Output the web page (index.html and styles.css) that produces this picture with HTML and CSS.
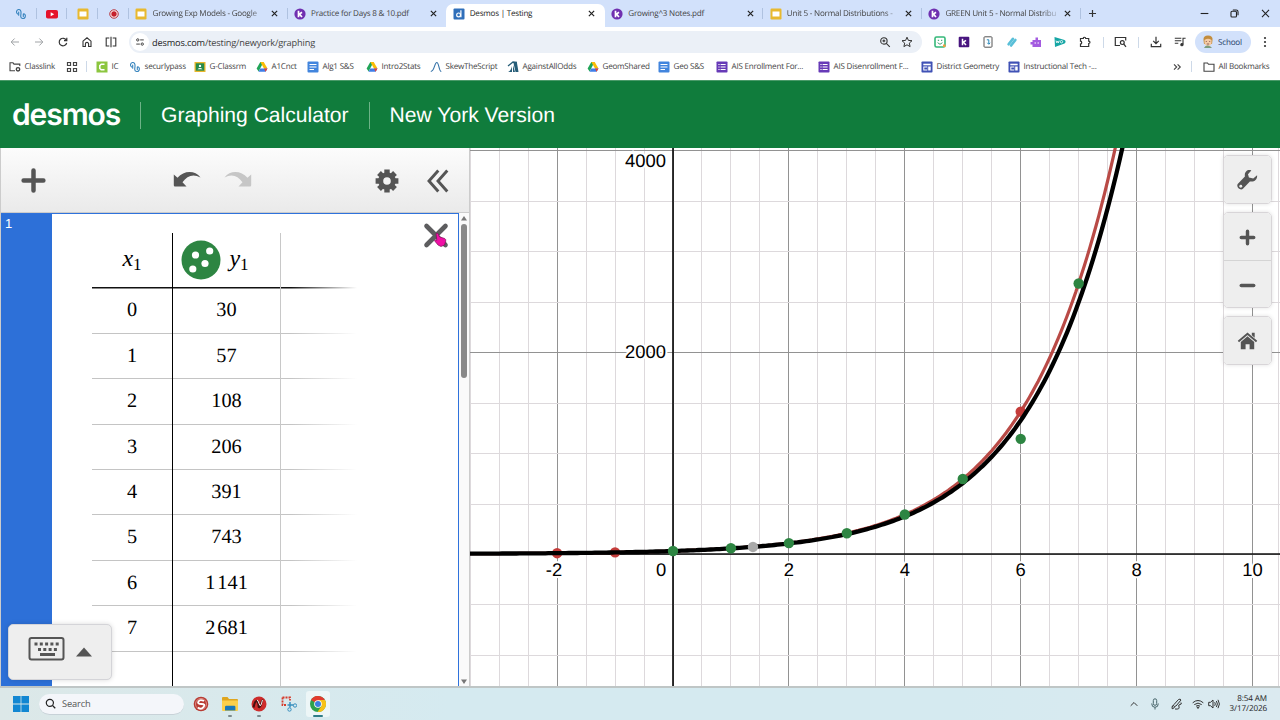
FILE: index.html
```html
<!DOCTYPE html>
<html lang="en">
<head>
  <meta charset="UTF-8">
  <title>Desmos | Testing</title>
  <link rel="stylesheet" href="styles.css">
</head>
<body>

  <!-- shared icons -->
  <svg width="0" height="0" class="defs">
    <symbol id="close" viewBox="0 0 10 10"><path d="M2.6 2.6l4.8 4.8M7.4 2.6L2.6 7.4" stroke="#222" stroke-width="1.1"/></symbol>
    <symbol id="slides" viewBox="0 0 12 12"><rect x=".5" y=".5" width="11" height="11" rx="1.2" fill="#e8b92f"/><rect x="2.5" y="3.5" width="7" height="5" fill="#fff"/></symbol>
    <symbol id="kami" viewBox="0 0 12 12"><circle cx="6" cy="6" r="5.6" fill="#7030b0"/><path d="M4.5 2.8v6.4M4.7 6.6L8 4.3M5.4 6.2L8 9" stroke="#fff" stroke-width="1.7"/></symbol>
    <symbol id="securly" viewBox="0 0 12 12"><path d="M2.600 6C.8 5 1.300 1.700 3.500 1.500S6.200 3.500 6 5.200L5.700 8.300C5.700 11 9.500 11.200 10.200 9S9.500 5.700 8.600 5.700M3.700 4v3.200M8.300 6v2.500" fill="none" stroke="#3482bd" stroke-width="1.100" stroke-linecap="round"/></symbol>
    <symbol id="drive" viewBox="0 0 12 12"><path d="M4.300 1h3.400L6 4 2.600 10.500.6 7.500z" fill="#21a558"/><path d="M7.700 1l3.800 6.500H8L4.300 1z" fill="#fbbc05"/><path d="M4.200 7.500h7.300L9.600 10.700H2.500z" fill="#3f7ee8"/><path d="M8 7.500h3.500l-1.900 3.200z" fill="#e84335"/></symbol>
    <symbol id="docs" viewBox="0 0 12 12"><rect x=".5" y=".5" width="11" height="11" rx="1" fill="#4285dd"/><path d="M2.500 3.500h7M2.500 6h7M2.500 8.500h4.500" stroke="#fff" stroke-width="1.200"/></symbol>
    <symbol id="forms" viewBox="0 0 12 12"><rect x=".5" y=".5" width="11" height="11" rx=".8" fill="#673ab7"/><path d="M4.600 3.500h5M4.600 6h5M4.600 8.500h5M2.400 3.500h1.200M2.400 6h1.200M2.400 8.500h1.200" stroke="#fff" stroke-width="1.200"/></symbol>
    <symbol id="sites" viewBox="0 0 12 12"><rect x=".5" y=".5" width="11" height="11" rx=".8" fill="#3f51b5"/><path d="M2.300 3.500h7.400" stroke="#fff" stroke-width="1.600"/><path d="M2.300 5.500h4v4h-4zM7.200 5.500h2.500v4H7.200z" fill="#fff"/><path d="M3.300 6.500h3v2h-3z" fill="#3f51b5"/></symbol>
  </svg>

  <div class="tabs">
    <div class="pin"><svg><use href="#securly"/></svg></div>
    <div class="pin"><svg viewBox="0 0 12 12"><rect y="2" width="12" height="8.500" rx="1.800" fill="#e5132b"/><path d="M4.700 4.200v4L8.200 6.200z" fill="#fff"/></svg></div>
    <div class="pin"><svg><use href="#slides"/></svg></div>
    <div class="pin"><svg viewBox="0 0 12 12"><circle cx="6" cy="6" r="4.200" fill="#fff" stroke="#b3262f" stroke-width="1"/><circle cx="6" cy="6" r="2.700" fill="#c5202c"/></svg></div>
    <div class="tab"><svg><use href="#slides"/></svg><span class="fade">Growing Exp Models - Google</span><svg class="x"><use href="#close"/></svg></div>
    <div class="tab nosep"><svg><use href="#kami"/></svg><span>Practice for Days 8 &amp; 10.pdf</span><svg class="x"><use href="#close"/></svg></div>
    <div class="tab active"><svg viewBox="0 0 12 12"><rect x=".5" y=".5" width="11" height="11" rx="1" fill="#2f6fba"/><circle cx="5.600" cy="6.900" r="1.900" fill="none" stroke="#fff" stroke-width="1.200"/><path d="M7.900 2.300v7" stroke="#fff" stroke-width="1.200"/></svg><span>Desmos | Testing</span><svg class="x"><use href="#close"/></svg></div>
    <div class="tab"><svg><use href="#kami"/></svg><span>Growing^3 Notes.pdf</span><svg class="x"><use href="#close"/></svg></div>
    <div class="tab"><svg><use href="#slides"/></svg><span class="fade">Unit 5 - Normal Distributions -</span><svg class="x"><use href="#close"/></svg></div>
    <div class="tab"><svg><use href="#kami"/></svg><span class="fade">GREEN Unit 5 - Normal Distribu</span><svg class="x"><use href="#close"/></svg></div>
    <svg class="new-tab" viewBox="0 0 10 10"><path d="M5 1.800v6.400M1.800 5h6.400" stroke="#333" stroke-width="1.100"/></svg>
    <div class="win">
      <svg viewBox="0 0 10 10"><path d="M1.500 5h7" stroke="#222"/></svg>
      <svg viewBox="0 0 10 10" fill="none" stroke="#222"><rect x="1.800" y="3" width="5" height="5.200" rx="1"/><path d="M3.500 1.800h3c1.200 0 1.700.6 1.700 1.700v3"/></svg>
      <svg viewBox="0 0 10 10"><path d="M1.800 1.800l6.400 6.400M8.200 1.800L1.800 8.200" stroke="#222"/></svg>
    </div>
  </div>

  <div class="toolbar">
    <div class="nav">
      <svg viewBox="0 0 12 12" fill="none" stroke="#a0a3a6" stroke-width="1"><path d="M10 6H2.300M5.600 2.500L2.200 6l3.400 3.500"/></svg>
      <svg viewBox="0 0 12 12" fill="none" stroke="#a0a3a6" stroke-width="1"><path d="M2 6h7.700M6.400 2.500L9.800 6 6.400 9.500"/></svg>
      <svg viewBox="0 0 12 12" fill="none" stroke="#333" stroke-width="1.200"><path d="M9.400 4.300A3.800 3.800 0 1 0 9.700 7M9.800 1.800v2.800H7"/></svg>
      <svg viewBox="0 0 12 12" fill="none" stroke="#333" stroke-width="1.100"><path d="M2 5.200L6 1.800l4 3.400v5.300H7.600V8c0-1-.7-1.600-1.600-1.600S4.400 7 4.400 8v2.500H2z"/></svg>
      <svg viewBox="0 0 12 12" fill="none" stroke="#333" stroke-width="1.100"><path d="M4.300 2H1.200v8h3.100M6 .8v10.400M7.700 2h3.100v8H7.700"/></svg>
    </div>
    <div class="omnibox">
      <div class="site-info"><svg viewBox="0 0 12 12" fill="none" stroke="#444" stroke-width="1.200"><circle cx="3.300" cy="3.500" r="1.400"/><path d="M6.200 3.500h4.300M1.500 8.500h4.300"/><circle cx="8.700" cy="8.500" r="1.400"/></svg></div>
      <span class="url"><b>desmos.com</b>/testing/newyork/graphing</span>
      <svg viewBox="0 0 12 12" fill="none" stroke="#333" stroke-width="1.100"><circle cx="4.900" cy="4.900" r="3.200"/><path d="M7.300 7.300l3.500 3.500M4.900 3.500v2.800M3.500 4.900h2.800"/></svg>
      <svg viewBox="0 0 12 12" fill="none" stroke="#333" stroke-width="1"><path d="M6 1.200l1.400 3.200 3.600.3-2.700 2.400.8 3.500L6 8.800l-3.100 1.800.8-3.500L1 4.700l3.600-.3z"/></svg>
    </div>
    <div class="extensions">
      <svg viewBox="0 0 12 12"><rect x="1" y="1" width="10" height="10" rx="1.500" fill="#fff" stroke="#35b879" stroke-width="1.600"/><path d="M3.800 4.300h1.300M7 4.300h1.300M3.800 6.500c.8 2 3.600 2 4.400 0" fill="none" stroke="#279665"/><path d="M9 8.500h2.500V11H9z" fill="#ef9d3c"/></svg>
      <svg viewBox="0 0 12 12"><rect x=".7" y=".7" width="10.600" height="10.600" rx="1" fill="#48157f"/><path d="M4.500 2.800v6.400M4.700 6.600L8 4.300M5.400 6.200L8 9" stroke="#fff" stroke-width="1.500"/></svg>
      <svg viewBox="0 0 12 12" fill="none"><rect x="2" y=".8" width="8" height="10.400" rx=".8" stroke="#555"/><path d="M4.800 3.800h2v4M5.300 6.800l1.500 1.500 1.300-1.500" stroke="#2586ba"/></svg>
      <svg viewBox="0 0 12 12" fill="none" stroke="#59bfd8" stroke-width="2.600" stroke-linecap="round"><path d="M2.600 8.300l4.300-5.500M5.100 9.500l4.300-5.500"/></svg>
      <svg viewBox="0 0 12 12"><path d="M2.500 4h3V1.500H8V4h3v7H2.500V8.500H.5V6h2z" fill="#a45be0"/><path d="M4.500 7h1.500M7.500 7H9" stroke="#fff"/></svg>
      <svg viewBox="0 0 12 12"><path d="M.5 1l10 3c1.500.5 1.400 2.900 0 3.400L1 11z" fill="#16a6a5"/><path d="M2 4.600l.8 2.200.8-1.500.8 1.500.8-2.200" stroke="#fff" stroke-width=".9" fill="none"/><circle cx="7.500" cy="5.700" r="1.200" stroke="#fff" stroke-width=".8" fill="none"/></svg>
      <svg viewBox="0 0 12 12" fill="none" stroke="#333" stroke-width="1.200"><path d="M1.500 2.500h2.800c0-1.700 2.400-1.700 2.400 0h3v2.700c1.700 0 1.700 2.300 0 2.300v3H1.500V8c1.600 0 1.600-2.800 0-2.800z"/></svg>
    </div>
    <i class="sep"></i>
    <svg class="tool lens" viewBox="0 0 12 12" fill="none" stroke="#333" stroke-width="1.200"><path d="M5.500 9.500H.8v-8h10.400v3"/><circle cx="7.800" cy="6.600" r="1.900"/><path d="M9.200 8l2.300 2.800"/></svg>
    <i class="sep"></i>
    <svg class="tool dl" viewBox="0 0 12 12" fill="none" stroke="#333" stroke-width="1.200"><path d="M6 .8v6.500M3.200 4.800L6 7.600l2.800-2.800M1.300 7.800v2.900h9.400V7.800"/></svg>
    <svg class="tool music" viewBox="0 0 12 12" fill="none" stroke="#333" stroke-width="1.100"><path d="M.8 2.300h6.500M.8 4.800h6.500M.8 7.300h3.500M9 8.600V2.300h2.600"/><circle cx="7.900" cy="8.700" r="1.100" fill="#333"/></svg>
    <div class="profile">
      <svg viewBox="0 0 12 14"><path d="M1.500 5Q1 .5 6 .5T10.500 5L10 9H2z" fill="#c28c3d"/><path d="M2.500 5q3.500-2.500 7 0v3Q9 11 6 11T2.500 8z" fill="#f4cba5"/><path d="M2 13q1-3 4-2.500t4 2.500z" fill="#7c9d7d"/><path d="M3.800 6.500h1M7.200 6.500h1M4.800 9h2.400" stroke="#744" stroke-width=".8"/></svg>
      <span>School</span>
    </div>
    <svg class="tool dots" viewBox="0 0 12 12" fill="#333"><circle cx="6" cy="2" r="1.100"/><circle cx="6" cy="6" r="1.100"/><circle cx="6" cy="10" r="1.100"/></svg>
  </div>

  <div class="bookmarks">
    <a><svg viewBox="0 0 12 12" fill="none" stroke="#444" stroke-width="1.100"><path d="M6 9.800H1v-8h3l1 1.300h5.800v2"/><circle cx="9" cy="8.300" r="1.700" stroke-width="1.400"/></svg>Classlink</a>
    <a><svg viewBox="0 0 12 12" fill="none" stroke="#444" stroke-width="1.200"><path d="M1.500 1.500h3v3h-3zM7.500 1.500h3v3h-3zM1.500 7.500h3v3h-3zM7.500 7.500h3v3h-3z"/></svg><i class="sep"></i></a>
    <a><svg viewBox="0 0 12 12"><rect x=".5" y=".5" width="11" height="11" fill="#8cc63f"/><path d="M8.500 3.300H5.200L3.800 4.600v2.800l1.400 1.300h3.300" fill="none" stroke="#fff" stroke-width="1.500"/></svg>IC</a>
    <a><svg><use href="#securly"/></svg>securlypass</a>
    <a><svg viewBox="0 0 12 12"><rect x=".5" y="1" width="11" height="10" fill="#e8b72d"/><rect x="1.800" y="2.300" width="8.400" height="7.400" fill="#268a4b"/><circle cx="6" cy="4.900" r="1.200" fill="#fff"/><path d="M3.500 8.300q2.500-2.800 5 0z" fill="#fff"/></svg>G-Classrm</a>
    <a><svg><use href="#drive"/></svg>A1Cnct</a>
    <a><svg><use href="#docs"/></svg>Alg1 S&amp;S</a>
    <a><svg><use href="#drive"/></svg>Intro2Stats</a>
    <a><svg viewBox="0 0 12 12" fill="none" stroke="#3472a8" stroke-width="1.100"><path d="M.8 10.500C4.500 10.500 4.500 1.500 6.800 1.500s2 9 4.500 9"/></svg>SkewTheScript</a>
    <a><svg viewBox="0 0 12 12"><path d="M1 11q3-1 4-6v6zM6 11V4l2 7zM8.500 11L6.500 2H10l1.500 9z" fill="#255c77"/><path d="M1 5l5-4 4 .5" fill="none" stroke="#255c77" stroke-width="1.300"/></svg>AgainstAllOdds</a>
    <a><svg><use href="#drive"/></svg>GeomShared</a>
    <a><svg><use href="#docs"/></svg>Geo S&amp;S</a>
    <a><svg><use href="#forms"/></svg>AIS Enrollment For...</a>
    <a><svg><use href="#forms"/></svg>AIS Disenrollment F...</a>
    <a><svg><use href="#sites"/></svg>District Geometry</a>
    <a><svg><use href="#sites"/></svg>Instructional Tech -...</a>
    <a><svg viewBox="0 0 12 12" fill="none" stroke="#444" stroke-width="1.100"><path d="M3 3.300L5.700 6 3 8.700M6.600 3.300L9.300 6 6.600 8.700"/></svg><i class="sep"></i></a>
    <a><svg viewBox="0 0 12 12" fill="none" stroke="#444" stroke-width="1.100"><path d="M1 2h3.500l1 1.300H11v7H1z"/></svg>All Bookmarks</a>
  </div>

  <div class="header">
    <span class="logo">desmos</span>
    <span class="title">Graphing Calculator</span>
    <span class="title version">New York Version</span>
  </div>

  <div class="calculator">
    <div class="panel">
      <div class="panel-bar">
        <svg class="add" viewBox="0 0 24 24"><path d="M12 2.500v19M2.500 12h19" stroke="#555" stroke-width="4.300" stroke-linecap="round"/></svg>
        <svg class="undo" viewBox="0 0 28 18"><path d="M.8 4.500l3.700 3.200C11 .3 22 0 27.500 7.500 20.500 3.500 14 5.500 9.500 12.300L13.500 16.500H2Q.8 16.500.8 15.300z" fill="#555"/></svg>
        <svg class="redo" viewBox="0 0 28 18"><path d="M27.200 4.500l-3.700 3.200C17 .3 6 0 .5 7.500c7-4 13.500-2 18 4.800l-4 4.200h11.500q1.200 0 1.200-1.200z" fill="#c6c6c6"/></svg>
        <svg class="gear" viewBox="0 0 24 24"><circle cx="12" cy="12" r="6.300" fill="none" stroke="#555" stroke-width="5"/><g stroke="#555" stroke-width="5.400"><path d="M12 .6v4M12 19.400v4M.6 12h4M19.400 12h4M4 4l2.700 2.700M17.300 17.300L20 20M20 4l-2.700 2.700M6.700 17.300L4 20"/></g></svg>
        <svg class="collapse" viewBox="0 0 24 24"><path d="M12.300 1.500L3 12l9.300 10.500M21.300 1.500L12 12l9.300 10.500" fill="none" stroke="#555" stroke-width="2.900"/></svg>
      </div>
      <div class="panel-body">
        <div class="expression">
          <div class="gutter">1</div>
          <div class="table">
            <div class="row head">
              <div><var>x</var><sub>1</sub></div>
              <div>
                <svg viewBox="0 0 40 40"><circle cx="20" cy="20" r="19.500" fill="#2d8542"/><g fill="#fff"><circle cx="14.500" cy="15" r="3.600"/><circle cx="28.700" cy="11" r="3.600"/><circle cx="24" cy="23.500" r="3.600"/><circle cx="11.800" cy="29" r="3.600"/></g></svg>
                <var>y</var><sub>1</sub>
              </div>
            </div>
            <div class="row"><div>0</div><div>30</div></div>
            <div class="row"><div>1</div><div>57</div></div>
            <div class="row"><div>2</div><div>108</div></div>
            <div class="row"><div>3</div><div>206</div></div>
            <div class="row"><div>4</div><div>391</div></div>
            <div class="row"><div>5</div><div>743</div></div>
            <div class="row"><div>6</div><div><span class="thousand">1</span>141</div></div>
            <div class="row"><div>7</div><div><span class="thousand">2</span>681</div></div>
            <div class="row last"><div></div><div></div></div>
          </div>
          <svg class="delete" viewBox="0 0 28 28"><path d="M4.500 4l19 19M23.500 4L4.500 23" stroke="#5d5d5f" stroke-width="4.600" stroke-linecap="round"/><path d="M14 11.500q1.500-1 2.400.8l1 2.500 5.300 1.700q1.500.8 1 2.800L22.500 23l-3.500 1.500-3-1.500-3.500-4.300q.5-1.500 2.300-.4z" fill="#f00fa5" stroke="#7a1257" stroke-width=".7"/></svg>
        </div>
        <div class="scrollbar">
          <svg viewBox="0 0 8 8"><path d="M1 6.500L4 2l3 4.500z" fill="#777"/></svg>
          <div class="thumb"></div>
          <svg viewBox="0 0 8 8"><path d="M1 1.500h6L4 6z" fill="#777"/></svg>
        </div>
      </div>
      <div class="keypad">
        <svg class="kb" viewBox="0 0 36 24" fill="none" stroke="#555"><rect x="1" y="1" width="34" height="21.500" rx="2" stroke-width="2"/><path d="M6 7h25M9.500 12.500h20" stroke-width="3" stroke-dasharray="3 2.300"/><path d="M11.500 17.500h15" stroke-width="3"/></svg>
        <svg class="up" viewBox="0 0 16 10"><path d="M0 9.500L8 .5l8 9z" fill="#555"/></svg>
      </div>
    </div>

    <div class="graph">
      <svg id="plot" width="810" height="538" viewBox="470 148 810 538"></svg>
      <div class="controls">
        <div class="group">
          <button><svg viewBox="0 0 24 24"><path d="M22 7.500l-4 3.500-4.500-1-1-3.500L16 2.500C12 1 8.500 4 9.300 8.800L2 16.500c-2.500 3 2.500 8 5.500 5L14.500 14C19 15 22.500 12 22 7.500z" fill="#555"/><circle cx="5" cy="19" r="1.500" fill="#eee"/></svg></button>
        </div>
        <div class="group zoom">
          <button><svg viewBox="0 0 24 24"><path d="M12 5.500v13M5.500 12h13" stroke="#555" stroke-width="3.600" stroke-linecap="round"/></svg></button>
          <button><svg viewBox="0 0 24 24"><path d="M5.500 12h13" stroke="#555" stroke-width="3.600" stroke-linecap="round"/></svg></button>
        </div>
        <div class="group">
          <button><svg viewBox="0 0 24 24"><path d="M2.500 13L12 5l9.500 8" fill="none" stroke="#555" stroke-width="2"/><path d="M16.500 4h3v5l-3-2.500zM5 13.500l7-6 7 6V21h-4.800v-5H10v5H5z" fill="#555"/></svg></button>
        </div>
      </div>
    </div>
  </div>

  <div class="taskbar">
    <svg class="start" viewBox="0 0 16 16"><path d="M0 0h7.600v7.600H0zM8.400 0H16v7.600H8.400zM0 8.400h7.600V16H0zM8.400 8.400H16V16H8.400z" fill="#1287d2"/></svg>
    <div class="search">
      <svg viewBox="0 0 12 12" fill="none" stroke="#222" stroke-width="1.300"><circle cx="5.300" cy="5.300" r="3.900"/><path d="M8.200 8.200l3 3"/></svg>
      <span>Search</span>
    </div>
    <div class="apps">
      <div class="app"><svg viewBox="0 0 16 16"><circle cx="8" cy="8" r="7.300" fill="#b83a32"/><circle cx="8" cy="8" r="5.500" fill="none" stroke="#e8b2a9" stroke-width=".7"/><path d="M11 5Q7 3 5.500 5.500T8.500 8t2 3-5.500.5" fill="none" stroke="#fff" stroke-width="1.900"/></svg></div>
      <div class="app open"><svg viewBox="0 0 16 16"><path d="M0 2q0-1 1-1h4.500L7 3h8q1 0 1 1v3H0z" fill="#dfa51e"/><path d="M0 4.500h16V14q0 1-1 1H1q-1 0-1-1z" fill="#fbd04b"/><path d="M3 14.500V11q0-1.200 1.200-1.200h8Q13.400 9.800 13.400 11v3.500z" fill="#1978b9"/></svg></div>
      <div class="app open"><svg viewBox="0 0 16 16"><circle cx="8" cy="8" r="7.500" fill="#cd2c2b"/><path d="M2.500 11.500Q4 4.500 5.700 5t2 6Q9 12 10 8t2-3.500" fill="none" stroke="#411" stroke-width="2"/><path d="M6 4q1 0 2 3.500t2 1.500L11.500 4" fill="none" stroke="#fff" stroke-width=".9"/></svg></div>
      <div class="app"><svg viewBox="0 0 16 16" fill="none"><path d="M1.500 1.500H9v3M1.500 1.500V9H5" stroke="#d63b2c" stroke-width="1.800" stroke-dasharray="2 1"/><path d="M9 6v5.500M6.500 9h6" stroke="#388fbe" stroke-width="1.500"/><circle cx="14" cy="9.500" r="1.700" stroke="#388fbe"/><circle cx="8.500" cy="13.500" r="1.700" stroke="#388fbe"/></svg></div>
      <div class="app current"><svg viewBox="0 0 16 16"><circle cx="8" cy="8" r="8" fill="#2da14d"/><path d="M8 8L1 4A8 8 0 0 1 15 4.200z" fill="#e33b2e"/><path d="M8 4h7a8 8 0 0 1-7.500 12L11.500 10z" fill="#f8c118"/><circle cx="8" cy="8" r="3.800" fill="#fff"/><circle cx="8" cy="8" r="3" fill="#3c7fe0"/></svg></div>
    </div>
    <div class="tray">
      <svg viewBox="0 0 12 12" fill="none" stroke="#333"><path d="M2.700 7.800L6 4.500l3.300 3.300"/></svg>
      <svg viewBox="0 0 12 12" fill="none" stroke="#47656a"><rect x="4.300" y=".8" width="3.400" height="6.500" rx="1.700"/><path d="M2.700 5.500q0 3.800 3.300 3.800t3.300-3.800M6 9.300v2.200"/></svg>
      <svg viewBox="0 0 12 12" fill="none" stroke="#333"><path d="M1 8.500q2-1.500 2.500 0T1.200 10.800Q0 9 3 6.500L7.500 1.500q2-1 2.500.5L5 8l-1.200.3M4 11q5 .5 4-2t1-2.500T10 4.500"/></svg>
      <svg viewBox="0 0 12 12" fill="none" stroke="#333"><path d="M.7 4.800q5.300-4.600 10.600 0M2.300 6.600q3.700-3 7.400 0M4 8.200q2-1.500 4 0"/><circle cx="6" cy="9.600" r=".7" fill="#333"/></svg>
      <svg viewBox="0 0 12 12" fill="none" stroke="#333"><path d="M.7 4.300h1.800L5 2v8L2.500 7.700H.7zM6.700 4.200q1.200 1.800 0 3.600M8.400 3q2 3 0 6M10 1.800q2.800 4.200 0 8.400"/></svg>
      <div class="clock">8:54 AM<br>3/17/2026</div>
    </div>
  </div>

  <script>
    const plot = document.getElementById('plot');
    const originX = 673, originY = 554;
    const unitX = 57.95, unitY = 0.1009;
    const px = x => originX + x * unitX;
    const py = y => originY - y * unitY;

    function line(x1, y1, x2, y2, cls) {
      return `<line x1="${x1}" y1="${y1}" x2="${x2}" y2="${y2}" class="${cls}"/>`;
    }

    function curve(a, b, cls) {
      let points = '';
      for (let x = -3.6; x < 8; x += 0.05) {
        points += `${px(x).toFixed(1)},${py(a * Math.pow(b, x)).toFixed(1)} `;
      }
      return `<polyline points="${points}" class="${cls}"/>`;
    }

    function dot(x, y, cls) {
      return `<circle cx="${px(x)}" cy="${py(y)}" r="5.2" class="${cls}"/>`;
    }

    function label(x, y, text, anchor) {
      return `<text x="${x}" y="${y}" text-anchor="${anchor}">${text}</text>`;
    }

    let out = '';

    // grid, every fourth vertical and horizontal line is a major one
    for (let i = -7; i <= 20; i++) {
      const x = Math.floor(px(i / 2)) + 0.5;
      out += line(x, 148, x, 687, i % 4 === 0 ? 'major' : 'minor');
    }
    out += line(1278.5, 148, 1278.5, 687, 'minor');
    for (let i = -2; i <= 8; i++) {
      const y = Math.round(py(i * 500)) + 0.5;
      out += line(470, y, 1280, y, i % 4 === 0 ? 'major' : 'minor');
    }
    out += line(originX, 148, originX, 687, 'axis');
    out += line(470, originY, 1280, originY, 'axis');

    out += curve(30, 1.9, 'red-curve');
    out += dot(-2, 8, 'red') + dot(-1, 16, 'red') + dot(6, 1411, 'red');
    out += curve(29.5, 1.885, 'black-curve');

    [30, 57, 108, 206, 391, 743, 1141, 2681].forEach((y, x) => out += dot(x, y, 'green'));
    out += dot(1.38, 70, 'grey');

    out += label(554, 576, '-2', 'middle') + label(661, 576, '0', 'middle');
    [2, 4, 6, 8, 10].forEach(x => out += label(px(x), 576, x, 'middle'));
    out += label(666, 167, '4000', 'end') + label(666, 358, '2000', 'end');

    plot.innerHTML = out;
  </script>

</body>
</html>
```
FILE: styles.css
```css
* {
  box-sizing: border-box;
}

body {
  margin: 0;
  width: 1280px;
  height: 720px;
  overflow: hidden;
  display: flex;
  flex-direction: column;
  font-family: "Open Sans", "Noto Sans", sans-serif;
  font-size: 8.1px;
  letter-spacing: -0.23px;
  text-rendering: geometricPrecision;
  color: #444;
  background: #fff;
}

svg {
  display: block;
  flex: none;
}

.defs {
  position: absolute;
}

.sep {
  width: 1px;
  height: 11px;
  background: #cdd9e8;
}

/* tab strip */
.tabs {
  height: 27px;
  padding-left: 5.8px;
  display: flex;
  align-items: stretch;
  background: #d2e1fb;
}

.tabs svg {
  width: 12px;
  height: 12px;
}

.pin {
  width: 30.8px;
  display: flex;
  align-items: center;
  justify-content: center;
  background: linear-gradient(#afc2e0, #afc2e0) right center / 1px 11px no-repeat;
}

.tab {
  width: 158.6px;
  padding-left: 6.5px;
  padding-right: 7.5px;
  display: flex;
  align-items: center;
  background: linear-gradient(#afc2e0, #afc2e0) right center / 1px 11px no-repeat;
}

.tab span {
  width: 112px;
  margin-left: 5px;
  white-space: nowrap;
}

.tab .fade {
  -webkit-mask-image: linear-gradient(to right, #000 86%, rgba(0, 0, 0, 0.3) 98%);
  mask-image: linear-gradient(to right, #000 86%, rgba(0, 0, 0, 0.3) 98%);
}

.tab .x {
  width: 11px;
  height: 11px;
  margin-left: auto;
}

.tab.nosep {
  background: none;
}

.tab.active {
  height: 23px;
  margin-top: 4px;
  padding-bottom: 4px;
  border-radius: 7px 7px 0 0;
  background: #fff;
  color: #222;
}

.tabs .new-tab {
  width: 11px;
  height: 11px;
  margin-left: 6px;
  align-self: center;
}

.win {
  margin-left: auto;
  padding-right: 9.5px;
  display: flex;
  align-items: center;
  gap: 19.5px;
}

.tabs .win svg {
  width: 11px;
  height: 11px;
}

/* address bar */
.toolbar {
  height: 30px;
  display: flex;
  align-items: center;
}

.toolbar svg {
  width: 12px;
  height: 12px;
}

.nav {
  width: 129px;
  padding-left: 8.5px;
  display: flex;
  gap: 12px;
}

.omnibox {
  width: 793px;
  height: 22px;
  padding: 0 9px 0 2px;
  display: flex;
  align-items: center;
  border-radius: 11px;
  background: #ebf0f7;
}

.omnibox > svg + svg {
  margin-left: 10px;
}

.site-info {
  width: 18px;
  height: 18px;
  display: flex;
  align-items: center;
  justify-content: center;
  border-radius: 50%;
  background: #fff;
}

.toolbar .site-info svg {
  width: 10px;
  height: 10px;
}

.url {
  flex: 1;
  margin-left: 3px;
  font-size: 9.2px;
  letter-spacing: -0.15px;
}

.url b {
  font-weight: normal;
  color: #1c1c1c;
}

.extensions {
  margin-left: 12px;
  margin-right: 12px;
  display: flex;
  gap: 12.1px;
}

.tool.lens {
  width: 13px;
  margin: 0 11px 0 10px;
}

.tool.dl {
  margin-left: 11px;
}

.tool.music {
  margin-left: 12px;
}

.profile {
  width: 56px;
  height: 22px;
  margin-left: 9px;
  padding-left: 7px;
  display: flex;
  align-items: center;
  gap: 4.5px;
  border-radius: 11px;
  background: #d2e1fb;
  color: #223a66;
}

.toolbar .profile svg {
  height: 14px;
}

.tool.dots {
  margin-left: 8.5px;
}

/* bookmarks bar */
.bookmarks {
  height: 23px;
  padding: 0 0 4px 9px;
  display: grid;
  grid-template-columns: 57px 30px 33px 65px 62px 51px 59px 64px 77px 80px 71px 58px 102px 103px 87px 163px 32px 1fr;
  align-items: center;
  white-space: nowrap;
}

.bookmarks a {
  display: flex;
  align-items: center;
  gap: 3.5px;
}

.bookmarks svg {
  width: 12px;
  height: 12px;
}

.bookmarks .sep {
  margin-left: 4px;
}

/* page header */
.header {
  height: 68px;
  padding-top: 1px;
  padding-left: 12px;
  display: flex;
  align-items: center;
  background: #107c3c;
  border-top: 1px solid #4a9a69;
  color: #fff;
  font-family: "Liberation Sans", Arial, sans-serif;
}

.logo {
  width: 128px;
  font-family: Inter, sans-serif;
  font-weight: 600;
  font-size: 30px;
  line-height: 30px;
  letter-spacing: -1.1px;
}

.title {
  height: 27px;
  padding-left: 20px;
  border-left: 1px solid #6db387;
  font-size: 21.1px;
  line-height: 28px;
  letter-spacing: 0;
}

.version {
  margin-left: 20px;
}

/* calculator */
.calculator {
  height: 540px;
  display: flex;
  border-bottom: 2px solid #bfc6c6;
  letter-spacing: 0;
}

.panel {
  position: relative;
  width: 470px;
  display: flex;
  flex-direction: column;
  border-left: 1px solid #ccc;
  border-right: 1px solid #ccc;
}

.panel-bar {
  height: 65px;
  padding-top: 1px;
  display: flex;
  align-items: center;
  background: linear-gradient(#fcfcfc, #eaeaea);
  border-bottom: 1px solid #ccc;
}

.add {
  width: 25px;
  height: 25px;
  margin-left: 19.5px;
}

.undo,
.redo {
  width: 28px;
  height: 18px;
  margin-bottom: 3px;
}

.undo {
  margin-left: 127px;
}

.redo {
  margin-left: 23px;
}

.gear {
  width: 24px;
  height: 24px;
  margin-left: 123px;
}

.collapse {
  width: 24px;
  height: 24px;
  margin-left: 27px;
}

.panel-body {
  height: 473px;
  display: flex;
}

.expression {
  position: relative;
  width: 458px;
  display: flex;
  border-top: 1px solid #2f72dc;
  border-right: 1px solid #2f72dc;
}

.gutter {
  width: 51px;
  padding: 2px 4px;
  background: #2d70d8;
  color: #fff;
  font-family: "Liberation Sans", Arial, sans-serif;
  font-size: 13px;
}

.table {
  height: 453px;
  margin: 19px 0 0 40px;
  overflow: hidden;
  font-family: "Liberation Serif", "Times New Roman", serif;
  font-size: 20.3px;
  color: #000;
}

.row {
  width: 265px;
  height: 45.4px;
  display: flex;
  background: linear-gradient(to right, #c4c4c4 75%, transparent) left bottom / 265px 1px no-repeat;
}

.row > div {
  padding-bottom: 0.6px;
  display: flex;
  align-items: center;
  justify-content: center;
}

.row > div:first-child {
  width: 81px;
  border-right: 1.5px solid #000;
}

.row > div:last-child {
  width: 108px;
  border-right: 1px solid #c8c8c8;
}

.row.head {
  height: 55.5px;
  background: linear-gradient(to right, #111 75%, transparent) left bottom / 265px 1.5px no-repeat;
}

.row.head > div {
  padding-bottom: 2px;
}

.row.last {
  background: none;
}

.head svg {
  width: 40px;
  height: 40px;
  margin-right: 8.5px;
}

.head > div:last-child {
  padding-right: 23.5px;
}

var {
  font-size: 24px;
}

sub {
  margin-top: 11px;
  font-size: 17px;
  line-height: 18px;
  vertical-align: baseline;
}

.thousand {
  margin-right: 2px;
}

.delete {
  position: absolute;
  top: 8px;
  right: 8px;
  width: 28px;
  height: 28px;
}

.scrollbar {
  width: 10px;
  padding-top: 1px;
  display: flex;
  flex-direction: column;
  align-items: center;
  background: #fafafa;
}

.scrollbar svg {
  width: 8px;
  height: 8px;
}

.scrollbar svg:last-child {
  margin-top: auto;
}

.thumb {
  width: 6px;
  height: 154px;
  margin-top: 2px;
  border-radius: 3px;
  background: #888;
}

.keypad {
  position: absolute;
  left: 7px;
  bottom: 6px;
  width: 104px;
  height: 56px;
  display: flex;
  align-items: center;
  gap: 11px;
  padding: 0 0 6px 19px;
  background: #eee;
  border: 1px solid #d4d4d8;
  border-radius: 5px;
  box-shadow: 0 0 5px rgba(0, 0, 0, 0.15);
}

.kb {
  width: 37px;
  height: 24px;
}

.up {
  width: 16px;
  height: 10px;
  margin-top: 5px;
}

.graph {
  position: relative;
  width: 810px;
  background: #fff;
}

.minor {
  stroke: #ddd9dc;
  stroke-width: 1;
}

.major {
  stroke: #929292;
  stroke-width: 1;
}

.axis {
  stroke: #111;
  stroke-width: 1.7;
}

.red-curve,
.black-curve {
  fill: none;
  stroke: #b94a46;
  stroke-width: 3.2;
}

.black-curve {
  stroke: #000;
  stroke-width: 4.3;
}

.red {
  fill: #c43c3a;
}

.green {
  fill: #2d8542;
}

.grey {
  fill: #a9a9a9;
}

#plot text {
  font-family: "Liberation Sans", Arial, sans-serif;
  font-size: 18.4px;
  fill: #000;
  stroke: #fff;
  stroke-width: 4;
  paint-order: stroke;
}

.controls {
  position: absolute;
  top: 7px;
  right: 8px;
  display: flex;
  flex-direction: column;
  gap: 8px;
}

.group {
  width: 49px;
  border: 1px solid #d8d5d8;
  border-radius: 5px;
  overflow: hidden;
  box-shadow: 0 0 4px rgba(0, 0, 0, 0.12);
}

.group button {
  display: flex;
  align-items: center;
  justify-content: center;
  width: 47px;
  height: 47px;
  padding: 0;
  border: 0;
  background: #eee;
}

.zoom button {
  padding-top: 2px;
}

.zoom button + button {
  border-top: 1px solid #d4d4d4;
}

.group svg {
  width: 23px;
  height: 23px;
}

/* windows taskbar */
.taskbar {
  height: 32px;
  padding: 0 13px;
  display: flex;
  align-items: center;
  background: linear-gradient(to right, #dce8e8, #d5eaf0 35%, #d5eaf0 75%, #dbeaf0);
}

.start {
  width: 16px;
  height: 16px;
}

.search {
  width: 145px;
  height: 21px;
  margin-left: 10px;
  padding-left: 6px;
  display: flex;
  align-items: center;
  gap: 6px;
  border-radius: 11px;
  background: #f4f6fa;
  border-bottom: 1px solid #c8d2d8;
  font-size: 9.3px;
  letter-spacing: -0.15px;
  color: #555;
}

.search svg {
  width: 11px;
  height: 11px;
}

.apps {
  margin-left: 4.5px;
  display: flex;
  gap: 5.4px;
}

.app {
  position: relative;
  width: 24px;
  height: 26px;
  display: flex;
  align-items: center;
  justify-content: center;
  border-radius: 3px;
}

.app svg {
  width: 16px;
  height: 16px;
}

.app.open::after,
.app.current::after {
  content: "";
  position: absolute;
  bottom: 0;
  width: 4px;
  height: 2px;
  border-radius: 1px;
  background: #7c8a8e;
}

.app.current {
  background: #edf6f7;
}

.app.current::after {
  width: 10px;
  background: #307d88;
}

.tray {
  margin-left: auto;
  display: flex;
  align-items: center;
}

.tray svg {
  width: 12px;
  height: 12px;
  margin-right: 9.5px;
}

.tray svg:nth-child(4) {
  margin-right: 4px;
}

.clock {
  width: 37.5px;
  font-size: 8.1px;
  line-height: 10.5px;
  letter-spacing: -0.1px;
  text-align: right;
  white-space: nowrap;
  color: #222;
}
```
